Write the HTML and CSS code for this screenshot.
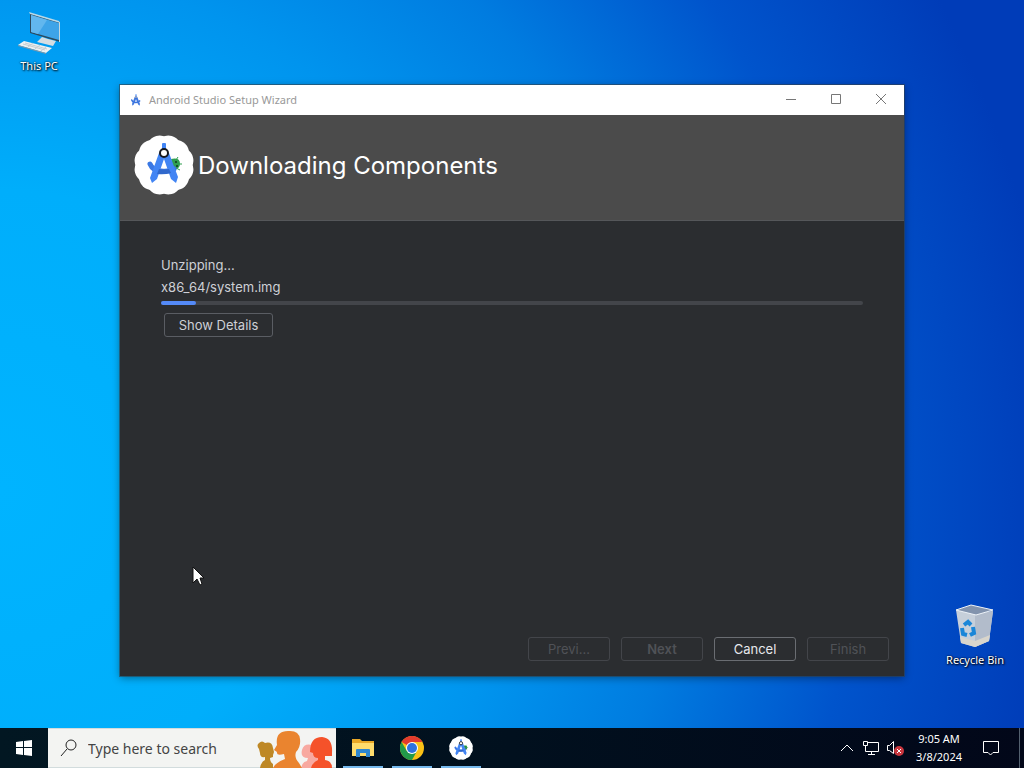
FILE: index.html
```
<!DOCTYPE html>
<html lang="en">
<head>
  <meta charset="UTF-8" />
  <meta name="viewport" content="width=device-width, initial-scale=1.0"/>
  <title>Android Studio Setup Wizard</title>
  <link rel="stylesheet" href="styles.css">
</head>
<body>
<svg class="defs" aria-hidden="true">
  <symbol id="compass" viewBox="12 7 36 42">
    <path d="M15 28 Q18 37 29 37 Q36 37 43 31" fill="none" stroke="#3a74dc" stroke-width="5" stroke-linecap="round"/>
    <path d="M25 18 L35 18 L44 42 L42 48 L37 43 L30 25 L23 43 L18 48 L16 42 Z" fill="#3f78e0"/>
    <rect x="28" y="8" width="4" height="7" rx="1" fill="#4285f4"/>
    <circle cx="30" cy="18" r="3" fill="#fff" stroke="#2b4c8c" stroke-width="2"/>
  </symbol>
  <symbol id="studio" viewBox="0 0 60 60">
    <g fill="#fff">
      <rect x="5" y="5" width="50" height="50" rx="13"/>
      <rect x="5" y="5" width="50" height="50" rx="13" transform="rotate(30 30 30)"/>
      <rect x="5" y="5" width="50" height="50" rx="13" transform="rotate(60 30 30)"/>
    </g>
    <g fill="#2f9e4f" stroke="#2f9e4f">
      <path d="M37 24 Q46 22 46 29 Q46 34 39 35 Z" stroke="none"/>
      <path d="M42 25 L44 22 M45 29 L48 29 M42 33 L46 35"/>
    </g>
    <circle cx="42" cy="27" r="1" fill="#10391c"/>
    <circle cx="43" cy="31" r="1" fill="#10391c"/>
    <path d="M16 29 Q19 36 27 36 Q35 37 40 34" fill="none" stroke="#3a78e4" stroke-width="5" stroke-linecap="round"/>
    <path d="M25 18 L35 18 L44 42 L42 48 L37 44 L30 24 L23 44 L18 48 L16 43 Z" fill="#4285f4"/>
    <path d="M25 34 Q30 35 35 34 L37 38 Q30 40 23 39 Z" fill="#3068cc"/>
    <rect x="28" y="8" width="4" height="7" rx="1" fill="#4285f4"/>
    <circle cx="30" cy="18" r="4" fill="#fff" stroke="#15181d" stroke-width="2"/>
  </symbol>
</svg>

<main class="desktop">
  <a class="shortcut this-pc" href="#">
    <svg width="48" height="48" viewBox="2 0 48 48" aria-hidden="true">
      <path d="M17 4 L47 13 V33 L17 24 Z" fill="#2c4a5e"/>
      <path d="M16 3 L46 12 L47 14 L17 5 Z" fill="#b9d9e8"/>
      <path d="M46 13 L47 13 V33 L46 33 Z" fill="#c5d8df"/>
      <path d="M18 6 L46 14 V31 L18 23 Z" fill="#3ea4e8"/>
      <path d="M18 6 L34 11 L25 25 L18 23 Z" fill="#62b7ee"/>
      <path d="M29 28 L35 30 L43 32 L40 37 L24 33 Z" fill="#d5dde2"/>
      <path d="M5 36 L11 32 L39 39 L33 44 Z" fill="#eef1f2"/>
      <path d="M5 36 L33 44 L33 45 L5 37 Z" fill="#8199a8"/>
      <path d="M10 35 L32 41 M12 34 L34 40 M15 38 L20 34 M22 40 L27 36 M28 42 L33 38" stroke="#c4cdd2" fill="none"/>
    </svg>
    <span>This PC</span>
  </a>

  <a class="shortcut recycle-bin" href="#">
    <svg width="48" height="48" viewBox="0 2 48 48" aria-hidden="true">
      <path d="M5 9 L24 13 L42 10 L38 40 L24 46 L10 42 Z" fill="#c6cfda"/>
      <path d="M24 13 L42 10 L38 40 L24 46 Z" fill="#b2bccb"/>
      <path d="M9 36 L24 40 L39 34 L38 40 L24 46 L10 42 Z" fill="#d8d5cc"/>
      <path d="M5 9 L20 4 L42 9 L25 14 Z" fill="#8293ad" stroke="#eef3f8"/>
      <g fill="none" stroke="#1a86d8" stroke-width="4">
        <path d="M13 24 L17 21 L20 24"/>
        <path d="M11 27 L12 33 L16 34"/>
        <path d="M22 26 L23 32 L19 34"/>
      </g>
    </svg>
    <span>Recycle Bin</span>
  </a>

  <section class="window">
    <header class="titlebar">
      <svg width="16" height="16" aria-hidden="true"><use href="#compass"/></svg>
      <span class="title">Android Studio Setup Wizard</span>
      <div class="window-controls">
        <button aria-label="Minimize"><svg width="12" height="12"><path d="M1 6.500 H11"/></svg></button>
        <button aria-label="Maximize"><svg width="12" height="12"><path d="M1.500 1.500 H10.500 V10.500 H1.500 Z"/></svg></button>
        <button aria-label="Close"><svg width="12" height="12"><path d="M1 1 L11 11 M11 1 L1 11"/></svg></button>
      </div>
    </header>

    <div class="banner">
      <svg width="60" height="60" aria-hidden="true"><use href="#studio"/></svg>
      <h1>Downloading Components</h1>
    </div>

    <div class="content">
      <p>Unzipping...</p>
      <p id="file">x86_64/system.img</p>
      <progress value="5" max="100" aria-labelledby="file"></progress>
      <button class="btn details">Show Details</button>
    </div>

    <footer class="actions">
      <button class="btn" disabled>Previ...</button>
      <button class="btn next" disabled>Next</button>
      <button class="btn cancel">Cancel</button>
      <button class="btn" disabled>Finish</button>
    </footer>
  </section>

  <svg class="cursor" width="14" height="21" viewBox="0 0 14 21" aria-hidden="true">
    <path d="M1 1 V17 L5 13 L8 19 L10 18 L8 12 H12 Z" fill="#fff" stroke="#111"/>
  </svg>
</main>

<footer class="taskbar">
  <button class="start" aria-label="Start">
    <svg width="16" height="16" viewBox="0 0 16 16"><path d="M0 2 L7 1 V7 H0 Z M8 1 L16 0 V7 H8 Z M0 8 H7 V15 L0 14 Z M8 8 H16 V16 L8 15 Z" fill="#fff"/></svg>
  </button>

  <label class="search">
    <svg width="18" height="18" viewBox="0 0 18 18" aria-hidden="true"><circle cx="11" cy="6" r="5" fill="none" stroke="#222"/><path d="M7 10 L1 17" stroke="#222"/></svg>
    <input type="text" placeholder="Type here to search" aria-label="Type here to search">
    <svg class="people" width="80" height="40" viewBox="0 0 80 40" aria-hidden="true">
      <path d="M4 40 Q5 34 9 32 V29 Q4 30 4 25 L3 21 Q0 17 3 15 Q6 12 9 15 Q16 13 17 20 L18 24 L17 27 V29 L14 30 Q14 34 17 36 L17 40 Z" fill="#be8826"/>
      <path d="M45 40 Q46 34 51 33 L52 30 Q44 30 46 22 Q48 15 56 17 Q64 19 62 28 L64 40 Z" fill="#f8a9a0"/>
      <path d="M17 40 Q20 34 29 31 L28 26 Q20 28 21 24 L18 22 L21 17 Q19 3 32 3 Q43 2 44 11 Q45 19 40 24 Q38 30 43 35 L46 40 Z" fill="#ea842f"/>
      <path d="M55 40 Q56 35 62 32 V30 Q57 30 57 25 L54 24 Q54 9 66 9 Q77 10 76 25 L76 28 L69 28 V32 Q76 33 76 40 Z" fill="#f5522a"/>
    </svg>
  </label>

  <nav class="apps">
    <button aria-label="File Explorer">
      <svg width="24" height="24" viewBox="0 0 24 24">
        <path d="M1 3 H9 L11 5 H23 V20 H1 Z" fill="#e9a827"/>
        <path d="M1 7 H23 V20 H1 Z" fill="#ffdc6c"/>
        <path d="M5 21 V14 Q5 13 6 13 H18 Q19 13 19 14 V21 H15 V17 H9 V21 Z" fill="#2f87cf"/>
      </svg>
    </button>
    <button aria-label="Google Chrome">
      <svg width="24" height="24" viewBox="0 0 24 24">
        <circle cx="12" cy="12" r="12" fill="#fbc116"/>
        <path d="M12 12 L1.600 6 A12 12 0 0 1 22.400 6 H12 Z" fill="#e33b2e"/>
        <path d="M1.600 6 A12 12 0 0 0 12 24 L17 15 L12 12 L6.800 15 Z" fill="#229a4a"/>
        <circle cx="12" cy="12" r="6" fill="#fff"/>
        <circle cx="12" cy="12" r="5" fill="#2f72df"/>
      </svg>
    </button>
    <button aria-label="Android Studio">
      <svg width="24" height="24"><use href="#studio"/></svg>
    </button>
  </nav>

  <div class="tray">
    <button aria-label="Show hidden icons"><svg width="14" height="14" viewBox="0 0 14 14"><path d="M1 10 L7 4 L13 10"/></svg></button>
    <button aria-label="Network"><svg width="18" height="16" viewBox="0 0 18 16"><path d="M6 2.500 H16.500 V11.500 H3.500 V6 M9.500 12 V15 M6 14.500 H13 M1.500 1.500 H5.500 V5.500 H1.500 Z"/></svg></button>
    <button aria-label="Volume, muted"><svg width="18" height="18" viewBox="0 0 18 18"><path d="M1.500 6.500 H3.500 L7.500 2.500 V14.500 L3.500 11.500 H1.500 Z"/><circle class="muted" cx="13" cy="12" r="5"/><path d="M11 10 L15 14 M15 10 L11 14"/></svg></button>
    <time class="clock" datetime="2024-03-08T09:05"><span>9:05 AM</span><span>3/8/2024</span></time>
    <button class="notifications" aria-label="Notifications"><svg width="18" height="18" viewBox="0 0 18 18"><path d="M1.500 2.500 H16.500 V13.500 H11 L8.500 16 L6 13.500 H1.500 Z"/></svg></button>
    <button class="show-desktop" aria-label="Show desktop"></button>
  </div>
</footer>
</body>
</html>
```
FILE: styles.css
```
* {
  box-sizing: border-box;
}
body {
  margin: 0;
  height: 100vh;
  display: flex;
  flex-direction: column;
  overflow: hidden;
  font-family: "Noto Sans", "Open Sans", sans-serif;
  font-size: 12px;
  background: radial-gradient(circle at 0 490px, #00b4ff 0, #00aefb 300px, #0094ee 520px, #007ce0 680px, #0054cc 860px, #003cb8 1060px);
}
button {
  padding: 0;
  border: none;
  background: none;
  font-family: inherit;
}
.defs {
  position: absolute;
  width: 0;
  height: 0;
}
.desktop {
  flex: 1;
  position: relative;
}

/* desktop icons */
.shortcut {
  position: absolute;
  width: 76px;
  display: flex;
  flex-direction: column;
  align-items: center;
  color: #fff;
  font-size: 11px;
  line-height: 16px;
  text-decoration: none;
  text-shadow: 1px 1px 2px #000, 0 0 2px #000;
}
.this-pc {
  left: 1px;
  top: 9px;
}
.recycle-bin {
  right: 11px;
  bottom: 60px;
}
.shortcut svg {
  margin-bottom: 1px;
}

/* wizard window */
.window {
  position: absolute;
  top: 85px;
  right: 120px;
  bottom: 52px;
  left: 120px;
  display: flex;
  flex-direction: column;
  background: #2b2d30;
  color: #ced0d6;
  font-family: Inter, sans-serif;
  font-size: 13px;
  box-shadow: 0 0 0 1px rgba(50,65,75,0.6), 0 2px 8px rgba(0,0,0,0.4);
}
.titlebar {
  height: 30px;
  padding: 0 1px 1px 8px;
  display: flex;
  align-items: center;
  gap: 5px;
  background: #fff;
  color: #999;
  font-family: "Noto Sans", "Open Sans", sans-serif;
  font-size: 11px;
}
.titlebar svg {
  padding: 2px;
}
.window-controls {
  margin-left: auto;
  display: flex;
  height: 100%;
}
.window-controls button {
  width: 45px;
}
.window-controls svg {
  padding: 0;
  fill: none;
  stroke: #777;
}
.banner {
  height: 106px;
  padding: 20px 14px;
  display: flex;
  align-items: flex-start;
  gap: 4px;
  background: #4b4b4b;
  border-bottom: 1px solid #55575a;
}
.banner h1 {
  margin: 0;
  color: #fff;
  font-size: 24px;
  font-weight: 400;
  line-height: 62px;
}
.content {
  flex: 1;
  padding: 33px 41px;
  display: flex;
  flex-direction: column;
  align-items: flex-start;
}
.content p {
  margin: 0;
  line-height: 22px;
}
progress {
  width: 100%;
  height: 4px;
  margin: 3px 0 8px;
  appearance: none;
  border: none;
}
progress::-webkit-progress-bar {
  background: #43454a;
  border-radius: 2px;
}
progress::-webkit-progress-value {
  background: #548af7;
  border-radius: 2px;
}
.btn {
  width: 82px;
  height: 24px;
  border: 1px solid #5a5d63;
  border-radius: 3px;
  color: #ced0d6;
  font-size: 13px;
}
.btn:disabled {
  border-color: #43454a;
  color: #505257;
}
.btn.details {
  width: 109px;
  margin-left: 3px;
}
.btn.next {
  font-weight: 600;
}
.btn.cancel {
  border-color: #6a6d72;
  color: #e6e8ec;
}
.actions {
  padding: 15px;
  display: flex;
  justify-content: flex-end;
  gap: 11px;
}
.cursor {
  position: absolute;
  left: 192px;
  top: 566px;
}

/* taskbar */
.taskbar {
  height: 40px;
  display: flex;
  background: linear-gradient(90deg, #021722, #01101e 50%, #020719);
  color: #fff;
}
.start {
  width: 48px;
}
.start svg {
  display: block;
  margin: auto;
}
.search {
  width: 288px;
  padding-left: 12px;
  display: flex;
  align-items: center;
  gap: 10px;
  background: #f3f4f2;
  border: 1px solid #d2dcdd;
  border-width: 1px 0;
}
.search input {
  flex: 1;
  min-width: 0;
  padding: 0;
  border: none;
  outline: none;
  background: none;
  font-family: inherit;
  font-size: 14px;
}
.search input::placeholder {
  color: #444;
  opacity: 1;
}
.apps {
  padding-left: 7px;
  display: flex;
  gap: 9px;
}
.apps button {
  width: 40px;
  display: flex;
  align-items: center;
  justify-content: center;
  border-bottom: 2px solid #76b9ed;
  padding-top: 2px;
}
.tray {
  margin-left: auto;
  display: flex;
  align-items: center;
}
.tray button {
  width: 24px;
  height: 40px;
  display: flex;
  align-items: center;
  justify-content: center;
}
.tray svg {
  fill: none;
  stroke: #fff;
}
.tray .muted {
  fill: #c9363e;
  stroke: none;
}
.clock {
  width: 64px;
  display: flex;
  flex-direction: column;
  align-items: center;
  font-size: 11px;
  line-height: 18px;
}
.tray .notifications {
  width: 40px;
}
.tray .show-desktop {
  width: 5px;
  margin-left: 8px;
  border-left: 1px solid #53606f;
}
```
